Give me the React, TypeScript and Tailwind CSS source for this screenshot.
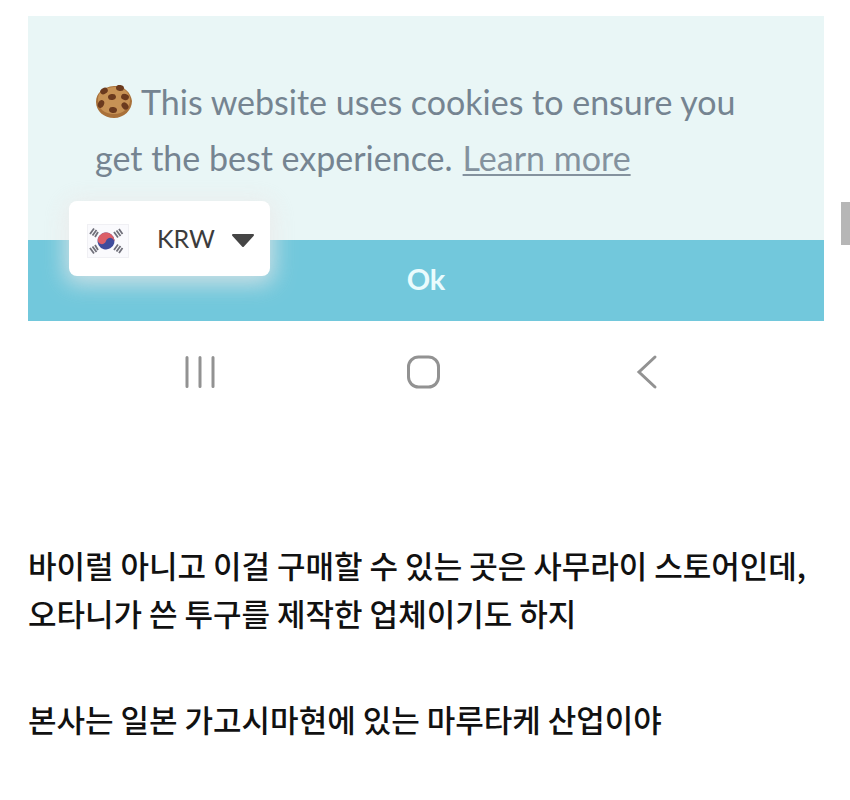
import type { ReactNode } from "react";

// x, y, rotation of each chocolate chip
const CHIPS = [
  [9, 6, -30],
  [25, 3, 10],
  [17, 12, -10],
  [30, 12, 15],
  [6, 19, -65],
  [18, 25, 10],
  [30, 21, 50],
];

function Cookie() {
  return (
    <svg viewBox="0 0 38 34" className="h-[34px] w-[38px] shrink-0" aria-hidden>
      <path
        d="M19 1C28 0 36 7 37 16c0 9-8 17-18 17S1 26 1 17 8 2 19 1Z"
        fill="#a9713a"
      />
      <path
        d="M19 2C28 1 35 7 35 15c0 8-7 14-16 14S3 24 3 15 9 3 19 2Z"
        fill="#c79255"
      />
      {CHIPS.map(([x, y, turn]) => (
        <ellipse
          key={`${x}-${y}`}
          cx={x}
          cy={y}
          rx="4"
          ry="3"
          fill="#6b3a1e"
          transform={`rotate(${turn} ${x} ${y})`}
        />
      ))}
    </svg>
  );
}

function KoreaFlag() {
  return (
    <svg viewBox="0 0 42 34" className="h-[34px] w-[42px]" aria-hidden>
      <rect x=".5" y=".5" width="41" height="33" fill="#fafafd" stroke="#f0f0f4" />
      <g transform="rotate(15 19 17)">
        <circle cx="19" cy="17" r="8.5" fill="#3f4c9c" />
        <path
          d="M10.5 17a8.5 8.5 0 0 1 17 0 4.25 4.25 0 0 0-8.5 0 4.25 4.25 0 0 1-8.5 0Z"
          fill="#dc5f68"
        />
      </g>
      <g stroke="#70707a" strokeWidth="1.8">
        <path d="M3 10l4-5.5M5.5 11.5l4-5.5M8 13l3-5" />
        <path d="M27 8l4 5.5M29.5 6.5l4 5.5M32 5l3.5 5" />
        <path d="M3 24l4 5.5M5.5 22.5l4 5.5M8 21l3 5" />
        <path d="M27 26l4-5.5M29.5 27.5l4-5.5M32 29l3.5-5" />
      </g>
    </svg>
  );
}

function CurrencyPicker() {
  return (
    <div className="absolute bottom-[45px] left-[41px] flex h-[75px] w-[201px] items-center rounded-lg bg-white shadow-[0_4px_22px_4px_rgba(236,232,232,0.75)]">
      <div className="pointer-events-none absolute left-[18px] pt-1">
        <KoreaFlag />
      </div>
      <select
        aria-label="Currency"
        defaultValue="KRW"
        className="h-full w-full appearance-none rounded-lg bg-transparent pl-[88px] font-['Lato',sans-serif] text-[25px] text-[#3c3c3c] outline-none"
      >
        <option>KRW</option>
        <option>USD</option>
        <option>JPY</option>
      </select>
      <svg
        viewBox="0 0 24 14"
        className="pointer-events-none absolute right-[15px] mt-1 h-[14px] w-6"
        aria-hidden
      >
        <path d="M2 1h20l-10 11Z" fill="#454545" stroke="#454545" strokeWidth="2" strokeLinejoin="round" />
      </svg>
    </div>
  );
}

function NavButton({ label, children }: { label: string; children: ReactNode }) {
  return (
    <button type="button" aria-label={label} className="flex size-10 items-center justify-center">
      <svg
        viewBox="0 0 40 40"
        className="size-10"
        fill="none"
        stroke="#929292"
        strokeWidth="3"
        strokeLinecap="round"
      >
        {children}
      </svg>
    </button>
  );
}

export default function App() {
  return (
    <main className="relative bg-white pt-4 pr-[26px] pb-12 pl-7">
      <section className="relative">
        <div className="h-[224px] bg-[#e9f6f6] pt-[58px] pl-[67px] font-['Lato',sans-serif] text-[34px] leading-[56px] text-[#758491]">
          <p className="flex items-center gap-2 whitespace-nowrap">
            <Cookie />
            This website uses cookies to ensure you
          </p>
          <p className="whitespace-nowrap">
            get the best experience.
            <a href="#" className="ml-2.5 text-[#84929e] underline decoration-2 underline-offset-3">
              Learn more
            </a>
          </p>
        </div>
        <button
          type="button"
          className="block h-[81px] w-full bg-[#72c8dc] pb-1 font-['Lato',sans-serif] text-[29px] font-bold text-[#eafbfd]"
        >
          Ok
        </button>
        <CurrencyPicker />
      </section>

      <nav className="flex justify-between pt-[31px] pr-[157px] pl-[153px]">
        <NavButton label="Recents">
          <path d="M6 5.5v29M19 5.5v29M32 5.5v29" />
        </NavButton>
        <NavButton label="Home">
          <rect x="4.5" y="5" width="30" height="30" rx="10" />
        </NavButton>
        <NavButton label="Back">
          <path d="M28 5L12 20l16 15" />
        </NavButton>
      </nav>

      <article className="flex flex-col gap-[58px] pt-[149px] font-['Noto_Sans_CJK_KR',sans-serif] text-[31px] leading-[48px] font-medium text-[#111]">
        <p className="whitespace-nowrap">
          바이럴 아니고 이걸 구매할 수 있는 곳은 사무라이 스토어인데,
          <br />
          오타니가 쓴 투구를 제작한 업체이기도 하지
        </p>
        <p className="whitespace-nowrap">본사는 일본 가고시마현에 있는 마루타케 산업이야</p>
      </article>

      <div className="absolute top-[202px] right-0 h-[43px] w-[9px] bg-[#b6b6b6]" />
    </main>
  );
}
